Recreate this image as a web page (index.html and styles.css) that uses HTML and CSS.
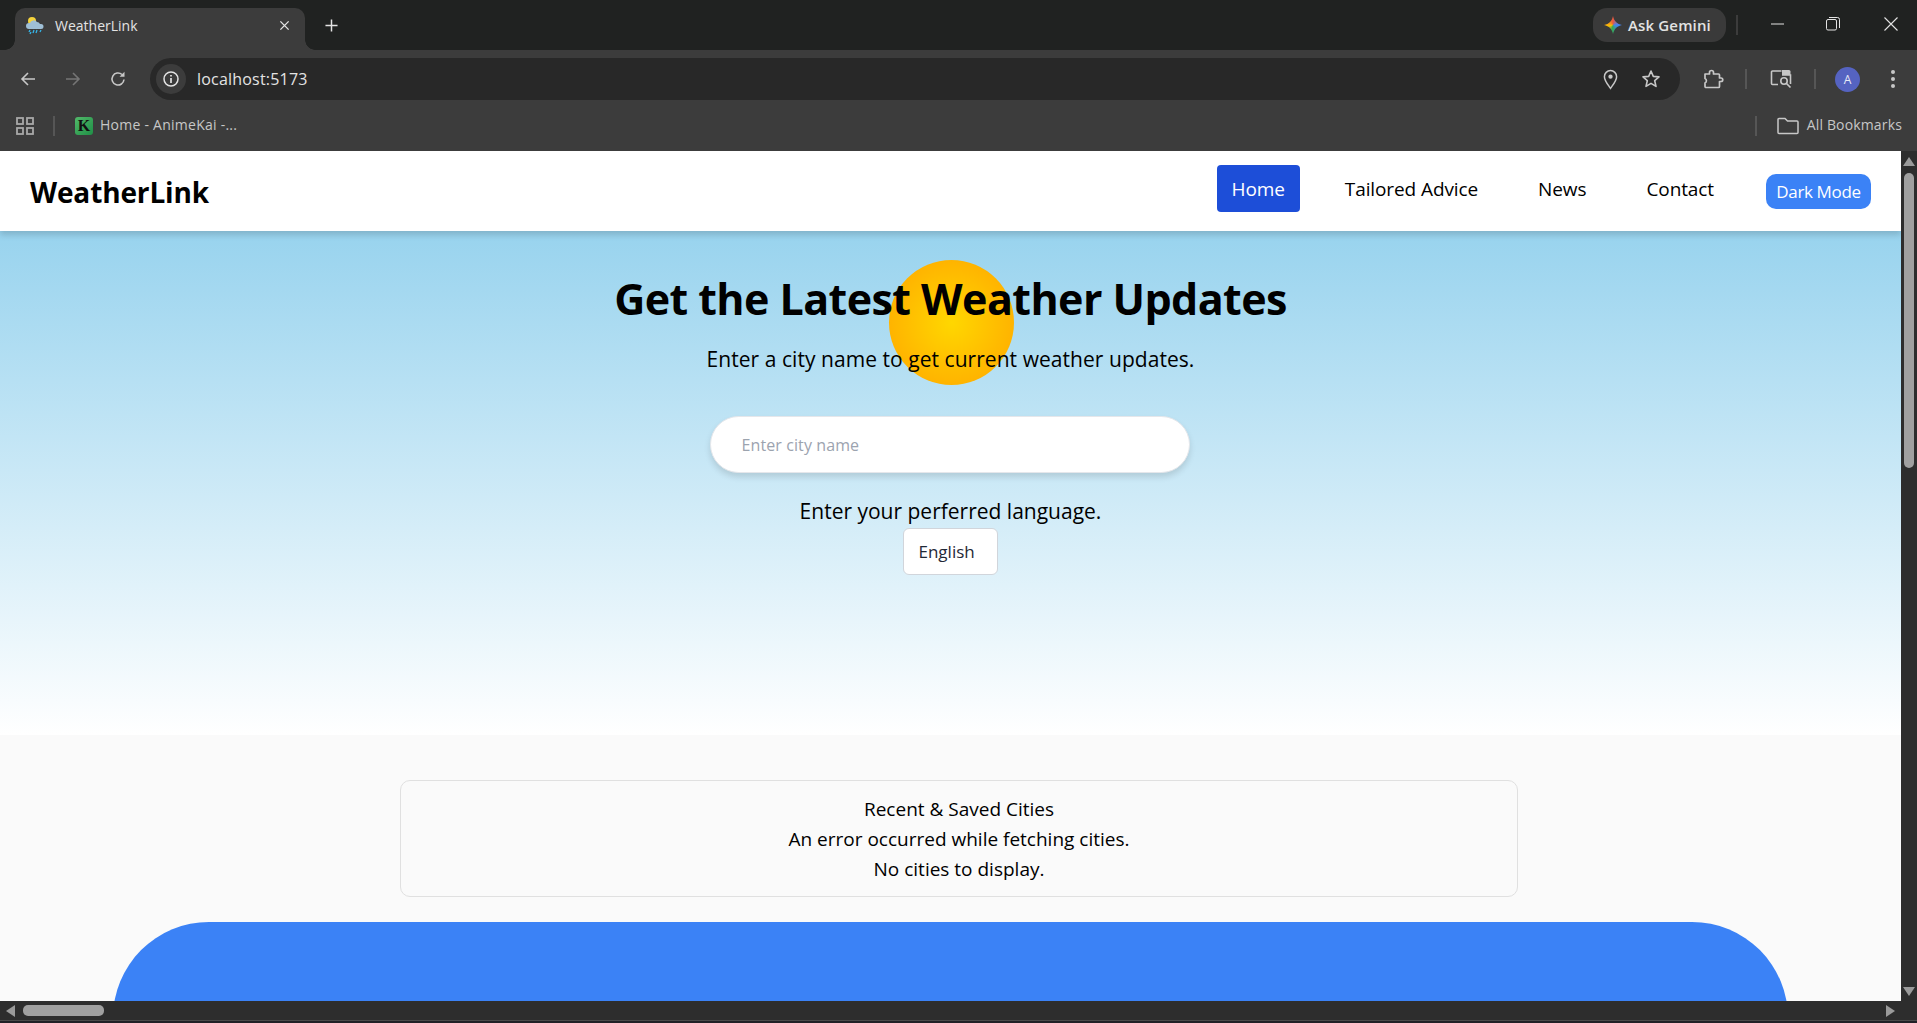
FILE: index.html
```html
<!DOCTYPE html>
<html lang="en">
<head>
<meta charset="utf-8">
<title>WeatherLink</title>
<link rel="stylesheet" href="styles.css">
</head>
<body>
<div class="browser">
  <div class="tabstrip">
    <div class="tab">
      <svg class="favicon" viewBox="0 0 18 19"><circle cx="6" cy="5" r="4" fill="#f5d33c"/><path d="M3 13a3 3 0 0 1 0-6h1a4 4 0 0 1 7-1 3.500 3.500 0 0 1 3 2h1a2.500 2.500 0 0 1 0 5z" fill="#9fbfd6"/><path d="M4 14l-1 2M8 14l-1 3M11 14l-1 3M15 14l-1 2M5 16l-1 2" stroke="#35b5e8" stroke-width="1.300"/></svg>
      <span class="tab-title">WeatherLink</span>
      <svg class="tab-close" viewBox="0 0 12 12"><path d="M1.500 1.500l9 9M10.500 1.500l-9 9" stroke="#e3e3e3" stroke-width="1.500"/></svg>
    </div>
    <svg class="new-tab" viewBox="0 0 14 14"><path d="M7 .5v13M.5 7h13" stroke="#e3e3e3" stroke-width="1.600"/></svg>
    <div class="spring"></div>
    <div class="gemini"><span class="spark"></span><span>Ask Gemini</span></div>
    <span class="strip-sep"></span>
    <svg class="win win-min" viewBox="0 0 14 14"><path d="M0 7h13" stroke="#e3e3e3" stroke-width="1"/></svg>
    <svg class="win win-max" viewBox="0 0 14 14"><rect x=".5" y="2.500" width="10" height="10.500" rx="1.500" fill="none" stroke="#e3e3e3"/><path d="M3 .5h8.500a2 2 0 0 1 2 2V11" fill="none" stroke="#e3e3e3"/></svg>
    <svg class="win win-close" viewBox="0 0 14 14"><path d="M.5.5l13 13M13.500.5l-13 13" stroke="#e3e3e3" stroke-width="1.100"/></svg>
  </div>
  <div class="toolbar">
    <svg class="nav-ico ico-back" viewBox="0 0 16 16"><path d="M15 8H2M8 2L2 8l6 6" fill="none" stroke="#c7c7c7" stroke-width="1.600"/></svg>
    <svg class="nav-ico ico-fwd" viewBox="0 0 16 16"><path d="M1 8h13M8 2l6 6-6 6" fill="none" stroke="#757575" stroke-width="1.600"/></svg>
    <svg class="nav-ico ico-reload" viewBox="0 0 16 16"><path d="M14 8.500A6 6 0 1 1 12 3.500" fill="none" stroke="#c7c7c7" stroke-width="1.600"/><path d="M14.500 .8v5h-5z" fill="#c7c7c7"/></svg>
    <div class="omnibox">
      <span class="info-chip"><svg viewBox="0 0 16 16"><circle cx="8" cy="8" r="7" fill="none" stroke="#e3e3e3" stroke-width="1.500"/><path d="M8 7v5M8 4v1.600" stroke="#e3e3e3" stroke-width="1.700"/></svg></span>
      <span class="url">localhost:5173</span>
      <div class="spring"></div>
      <svg class="omni-pin" viewBox="0 0 16 22"><path d="M8 20.500C4.500 15.500 1.500 12 1.500 8a6.500 6.500 0 0 1 13 0c0 4-3 7.500-6.500 12.500z" fill="none" stroke="#c7c7c7" stroke-width="1.600"/><circle cx="8" cy="8" r="2.300" fill="#c7c7c7"/></svg>
      <svg class="omni-star" viewBox="0 0 20 20"><path d="M10 2l2.300 5.400 5.700.5-4.300 3.800 1.300 5.700L10 14.400l-5 3 1.300-5.700L2 7.900l5.700-.5z" fill="none" stroke="#c7c7c7" stroke-width="1.600" stroke-linejoin="round"/></svg>
    </div>
    <svg class="tool-ext" viewBox="0 0 21 20"><path d="M2 5h4.500V3.500a2 2 0 0 1 4 0V5H15.500a1 1 0 0 1 1 1v3h1.500a1.500 1.500 0 0 1 0 3.500h-1.500V17.500a1 1 0 0 1-1 1H3a1 1 0 0 1-1-1V14a2.500 2.500 0 0 0 0-4.500z" fill="none" stroke="#c7c7c7" stroke-width="1.700" stroke-linejoin="round"/></svg>
    <span class="tool-sep sep-a"></span>
    <svg class="tool-tabsearch" viewBox="0 0 22 20"><path d="M8 15.500H2.500a1 1 0 0 1-1-1V3a1 1 0 0 1 1-1h9" fill="none" stroke="#c7c7c7" stroke-width="1.600"/><path d="M12 1h7a1.500 1.500 0 0 1 1.500 1.500V6H12z" fill="#c7c7c7"/><path d="M12 6h8.500v9" fill="none" stroke="#c7c7c7" stroke-width="1.600"/><circle cx="14" cy="12" r="3.200" fill="#3c3c3c" stroke="#c7c7c7" stroke-width="1.600"/><path d="M16.500 14.500l4 4" stroke="#c7c7c7" stroke-width="1.700"/></svg>
    <span class="tool-sep sep-b"></span>
    <span class="avatar">A</span>
    <svg class="tool-menu" viewBox="0 0 6 20"><circle cx="3" cy="3" r="2" fill="#c7c7c7"/><circle cx="3" cy="10" r="2" fill="#c7c7c7"/><circle cx="3" cy="17" r="2" fill="#c7c7c7"/></svg>
  </div>
  <div class="bookmarks">
    <svg class="apps" viewBox="0 0 18 18"><g fill="none" stroke="#a8a8a8" stroke-width="1.800"><rect x="1" y="1" width="6" height="6"/><rect x="11" y="1" width="6" height="6"/><rect x="1" y="11" width="6" height="6"/><rect x="11" y="11" width="6" height="6"/></g></svg>
    <span class="bm-sep"></span>
    <span class="bm-fav"><span>K</span></span>
    <span class="bm-title">Home - AnimeKai -...</span>
    <div class="spring"></div>
    <span class="bm-sep bm-sep-r"></span>
    <svg class="folder" viewBox="0 0 22 18"><path d="M1 2.500a1 1 0 0 1 1-1h6l2.500 2.500H20a1 1 0 0 1 1 1V15.500a1 1 0 0 1-1 1H2a1 1 0 0 1-1-1z" fill="none" stroke="#c7c7c7" stroke-width="1.500"/></svg>
    <span class="bm-all">All Bookmarks</span>
  </div>
  <div class="viewport">
    <main class="page">
      <nav class="navbar">
        <div class="brand">WeatherLink</div>
        <div class="nav-links">
          <a class="nav-link is-active">Home</a>
          <a class="nav-link">Tailored Advice</a>
          <a class="nav-link">News</a>
          <a class="nav-link">Contact</a>
        </div>
        <button class="dark-btn">Dark Mode</button>
      </nav>
      <section class="hero">
        <div class="sun"></div>
        <h1 class="hero-title">Get the Latest Weather Updates</h1>
        <p class="hero-sub">Enter a city name to get current weather updates.</p>
        <div class="search"><span class="placeholder">Enter city name</span></div>
        <p class="lang-label">Enter your perferred language.</p>
        <div class="lang-select">English</div>
      </section>
      <section class="content">
        <div class="cities">
          <div>Recent &amp; Saved Cities</div>
          <div>An error occurred while fetching cities.</div>
          <div>No cities to display.</div>
        </div>
        <div class="forecast"></div>
      </section>
    </main>
    <div class="vscroll">
      <span class="arrow-up"></span>
      <span class="vthumb"></span>
      <div class="spring"></div>
      <span class="arrow-down"></span>
    </div>
  </div>
  <div class="hscroll">
    <span class="arrow-left"></span>
    <span class="hthumb"></span>
    <div class="spring"></div>
    <span class="arrow-right"></span>
  </div>
  <div class="bottom-strip"></div>
</div>
</body>
</html>
```
FILE: styles.css
```css
* { box-sizing: border-box; }
html, body { margin: 0; height: 100%; overflow: hidden; }
body { font-family: "Open Sans", "Noto Sans", sans-serif; color: #000; background: #202221; }
svg { display: block; flex: none; }
.spring { flex: 1; }
.browser { width: 1917px; height: 1023px; display: flex; flex-direction: column; overflow: hidden; }

.tabstrip { height: 50px; flex: none; display: flex; align-items: flex-start; background: #202221; padding-left: 15px; }
.tab { width: 290px; height: 42px; margin-top: 8px; background: #3c3c3c; border-radius: 10px 10px 0 0; display: flex; align-items: center; padding: 0 0 8px 11px; position: relative; }
.tab::before, .tab::after { content: ""; position: absolute; bottom: 0; width: 10px; height: 10px; }
.tab::before { left: -10px; background: radial-gradient(circle at 0 0, transparent 9.500px, #3c3c3c 10px); }
.tab::after { right: -10px; background: radial-gradient(circle at 100% 0, transparent 9.500px, #3c3c3c 10px); }
.favicon { width: 18px; height: 19px; }
.tab-title { margin-left: 11px; font-size: 14px; color: #e3e3e3; }
.tab-close { width: 11px; height: 11px; margin-left: auto; margin-right: 15px; }
.new-tab { width: 13px; height: 13px; margin: 19px 0 0 20px; }
.gemini { width: 133px; height: 34px; margin-top: 8px; border-radius: 14px; background: #3a3a3a; display: flex; align-items: center; padding-left: 11px; gap: 6px; color: #e3e3e3; font-size: 15px; font-weight: 600; letter-spacing: .15px; }
.spark { width: 18px; height: 18px; background: conic-gradient(#e9573f, #4285f4 90deg, #34a853 190deg, #fbbc04 260deg, #e9573f); clip-path: path("M9 0C10 5 13 8 18 9C13 10 10 13 9 18C8 13 5 10 0 9C5 8 8 5 9 0Z"); }
.strip-sep { width: 2px; height: 20px; margin: 15px 0 0 10px; background: #3c3c3c; }
.win { width: 14px; height: 14px; }
.win-min { margin: 17px 0 0 33px; }
.win-max { margin: 17px 0 0 41px; }
.win-close { margin: 17px 0 0 44px; margin-right: 19px; }

.toolbar { height: 51px; flex: none; display: flex; align-items: center; background: #3c3c3c; padding: 7px 0 0 20px; }
.nav-ico { width: 16px; height: 16px; }
.ico-fwd { margin-left: 29px; }
.ico-reload { margin-left: 29px; margin-right: 24px; }
.omnibox { width: 1530px; height: 42px; border-radius: 21px; background: #282828; display: flex; align-items: center; padding: 0 19px 0 6px; flex: none; }
.info-chip { width: 30px; height: 30px; border-radius: 50%; background: #3c3c3c; display: flex; align-items: center; justify-content: center; }
.info-chip svg { width: 16px; height: 16px; }
.url { margin-left: 11px; font-size: 16px; letter-spacing: .2px; color: #e3e3e3; }
.omni-pin { width: 15px; height: 21px; margin-right: 23px; }
.omni-star { width: 20px; height: 20px; }
.tool-ext { width: 21px; height: 20px; margin-left: 23px; }
.tool-sep { width: 2px; height: 20px; background: #565656; }
.sep-a { margin-left: 21px; }
.tool-tabsearch { width: 22px; height: 20px; margin-left: 23px; }
.sep-b { margin-left: 22px; }
.avatar { width: 25px; height: 25px; border-radius: 50%; background: #5563c1; color: #e8eaf6; display: flex; align-items: center; justify-content: center; font-size: 12px; margin-left: 19px; }
.tool-menu { width: 6px; height: 20px; margin-left: 30px; }

.bookmarks { height: 50px; flex: none; display: flex; align-items: center; background: #3c3c3c; padding: 0 15px 0 16px; }
.apps { width: 18px; height: 18px; }
.bm-sep { width: 2px; height: 20px; background: #565656; margin-left: 19px; }
.bm-fav { width: 18px; height: 18px; margin-left: 20px; border-radius: 3px; background: linear-gradient(135deg, #52b96a, #1f8f46); display: flex; align-items: center; justify-content: center; color: #111; font: 700 16px/18px "Liberation Serif", serif; }
.bm-title { margin: -3px 0 0 7px; font-size: 14px; color: #c7c7c7; letter-spacing: .25px; }
.bm-sep-r { margin-left: 0; }
.folder { width: 22px; height: 18px; margin-left: 20px; }
.bm-all { margin: -3px 0 0 8px; font-size: 14px; color: #c7c7c7; letter-spacing: .15px; }

.viewport { height: 850px; flex: none; display: flex; }
.page { flex: 1; min-width: 0; background: #fafafa; overflow: hidden; }
.navbar { height: 80px; background: #fff; display: flex; align-items: center; padding: 0 30px; box-shadow: 0 4px 6px rgba(0,0,0,.15); position: relative; z-index: 2; }
.brand { font-size: 28px; font-weight: 700; letter-spacing: -.13px; margin: 2px auto 0 0; }
.nav-links { display: flex; gap: 30px; margin-top: -5px; }
.nav-link { height: 47px; padding: 0 15px; display: flex; align-items: center; border-radius: 4px; font-size: 19px; letter-spacing: -.1px; }
.is-active { background: #1d4ed8; color: #fff; }
.dark-btn { width: 105px; height: 35px; margin: 0 0 0 37px; border: 0; border-radius: 10px; background: #3b82f6; color: #fff; font: 17px "Open Sans", "Noto Sans", sans-serif; letter-spacing: -.35px; padding: 0; }

.hero { height: 504px; background: linear-gradient(#98d3ee, #fff); display: flex; flex-direction: column; align-items: center; position: relative; padding-top: 33px; }
.sun { position: absolute; left: 889px; top: 29px; width: 125px; height: 125px; border-radius: 50%; background: radial-gradient(circle, #ffd700, #ffa500); }
.hero-title { margin: 0; font-size: 43px; line-height: 70px; font-weight: 700; position: relative; letter-spacing: -.57px; }
.hero-sub { margin: 10px 0 0; font-size: 21px; line-height: 30px; position: relative; letter-spacing: .05px; }
.search { width: 480px; height: 57px; margin: 42px 2px 0 0; border-radius: 29px; background: #fff; border: 1px solid #e5e7eb; box-shadow: 0 4px 6px rgba(0,0,0,.12); display: flex; align-items: center; padding: 0 31px; }
.placeholder { color: #9ca3af; font-size: 16px; letter-spacing: .1px; }
.lang-label { margin: 23px 0 0; font-size: 21px; line-height: 30px; }
.lang-select { width: 95px; height: 47px; margin: 2px 1px 0 0; background: #fff; border: 1px solid #d1d5db; border-radius: 6px; display: flex; align-items: center; padding-left: 15px; font-size: 17px; font-weight: 500; color: #1f2937; }

.content { padding-top: 45px; display: flex; flex-direction: column; align-items: center; }
.cities { width: 1118px; height: 117px; border: 1px solid #e0e0e0; border-radius: 10px; display: flex; flex-direction: column; align-items: center; justify-content: center; font-size: 19px; line-height: 30px; margin-left: 17px; }
.forecast { width: 1675px; height: 300px; margin-top: 25px; border-radius: 96px; background: #3b82f6; }

.vscroll { width: 16px; flex: none; background: #2d2d2d; display: flex; flex-direction: column; align-items: center; padding: 6px 0 5px; }
.arrow-up { width: 0; height: 0; border-left: 6px solid transparent; border-right: 6px solid transparent; border-bottom: 9px solid #9a9a9a; }
.arrow-down { width: 0; height: 0; border-left: 6px solid transparent; border-right: 6px solid transparent; border-top: 9px solid #9a9a9a; }
.vthumb { width: 10px; height: 295px; margin-top: 7px; border-radius: 5px; background: #a0a0a0; }

.hscroll { height: 19px; flex: none; background: #2d2d2d; display: flex; align-items: center; padding: 0 22px 0 6px; }
.arrow-left { width: 0; height: 0; border-top: 6px solid transparent; border-bottom: 6px solid transparent; border-right: 9px solid #9a9a9a; }
.arrow-right { width: 0; height: 0; border-top: 6px solid transparent; border-bottom: 6px solid transparent; border-left: 9px solid #9a9a9a; }
.hthumb { width: 81px; height: 11px; margin-left: 8px; border-radius: 5px; background: #a0a0a0; }
.bottom-strip { height: 3px; flex: none; background: #202026; border-top: 1px solid #4a4a4a; }
```
